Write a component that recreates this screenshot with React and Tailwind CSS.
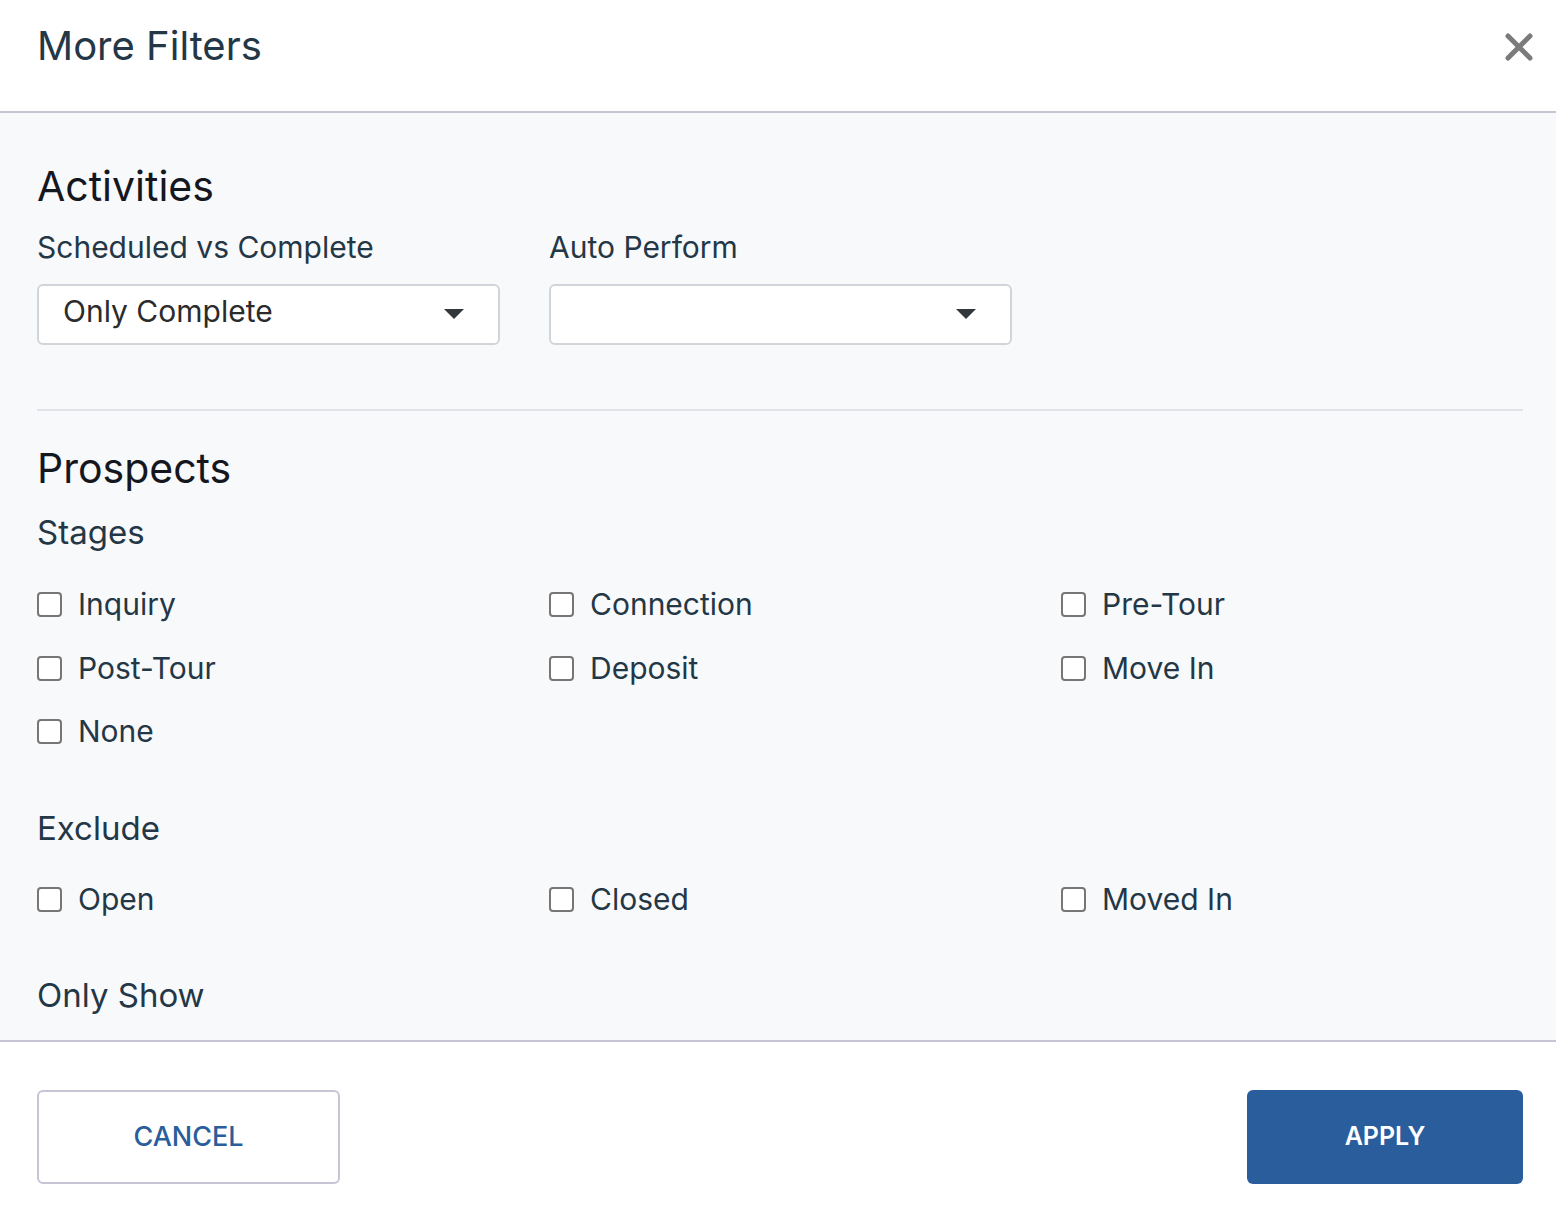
import React from "react";

const font = { fontFamily: "Inter, 'Noto Sans', sans-serif" };

const Checkbox = ({ label }) => (
  <label className="flex items-center gap-4 h-[63.5px] text-[30px] text-[#243746]">
    <span className="w-[25px] h-[25px] shrink-0 rounded-[4px] border-2 border-[#767676] bg-white"></span>
    {label}
  </label>
);

const Select = ({ value }) => (
  <div className="w-[463px] h-[61px] rounded-[6px] border-2 border-[#d1d5da] bg-white flex items-center justify-between pl-[24px] pr-[34px] text-[30px] text-[#2b2b2b]">
    <span className="-mt-[6px]">{value}</span>
    <svg width="20" height="10" viewBox="0 0 20 10" className="-mt-[2px]">
      <path d="M0 0 L20 0 L10 10 Z" fill="#33383d" />
    </svg>
  </div>
);

const App = () => {
  return (
    <div className="w-full h-[1222px] flex flex-col bg-white" style={font}>
      <div className="h-[113px] shrink-0 flex items-center justify-between pl-[37px] pr-[33px] border-b-2 border-[#c6c4d5]">
        <h1 className="text-[40px] text-[#243746] -mt-[20px]">More Filters</h1>
        <svg width="28" height="28" viewBox="0 0 28 28" className="-mt-[18px] -mr-[10px]">
          <path d="M3 3 L25 25 M25 3 L3 25" stroke="#7b7b7b" strokeWidth="5" strokeLinecap="round" />
        </svg>
      </div>

      <div className="flex-1 overflow-hidden bg-[#f8f9fb] pl-[37px] pr-[33px] pt-[48px]">
        <h2 className="text-[41px] text-[#15171f] leading-[50px]">Activities</h2>
        <div className="grid grid-cols-[512px_512px] mt-[16px]">
          <div>
            <p className="text-[30px] text-[#243746] leading-[40px]">Scheduled vs Complete</p>
            <div className="mt-[17px]">
              <Select value="Only Complete" />
            </div>
          </div>
          <div>
            <p className="text-[30px] text-[#243746] leading-[40px]">Auto Perform</p>
            <div className="mt-[17px]">
              <Select value="" />
            </div>
          </div>
        </div>

        <div className="mt-[64px] border-t-2 border-[#e0e3e7]"></div>

        <h2 className="text-[41px] text-[#15171f] leading-[50px] mt-[32px]">Prospects</h2>
        <p className="text-[33px] text-[#243746] leading-[44px] mt-[17px]">Stages</p>
        <div className="grid grid-cols-[512px_512px_512px] mt-[19px]">
          {["Inquiry", "Connection", "Pre-Tour", "Post-Tour", "Deposit", "Move In", "None"].map((s) => (
            <Checkbox key={s} label={s} />
          ))}
        </div>

        <p className="text-[33px] text-[#243746] leading-[44px] mt-[42px]">Exclude</p>
        <div className="grid grid-cols-[512px_512px_512px] mt-[18px]">
          {["Open", "Closed", "Moved In"].map((s) => (
            <Checkbox key={s} label={s} />
          ))}
        </div>

        <p className="text-[33px] text-[#243746] leading-[44px] mt-[42px]">Only Show</p>
      </div>

      <div className="h-[182px] shrink-0 border-t-2 border-[#c6c4d5] flex items-start justify-between pl-[37px] pr-[33px] pt-[48px]">
        <button className="w-[303px] h-[94px] rounded-[6px] border-2 border-[#c6c4d5] bg-white text-[27px] font-medium text-[#2a5d9b]">
          CANCEL
        </button>
        <button className="w-[276px] h-[94px] rounded-[6px] bg-[#2a5d9b] text-[25px] font-semibold text-white">
          APPLY
        </button>
      </div>
    </div>
  );
};

export default App;
